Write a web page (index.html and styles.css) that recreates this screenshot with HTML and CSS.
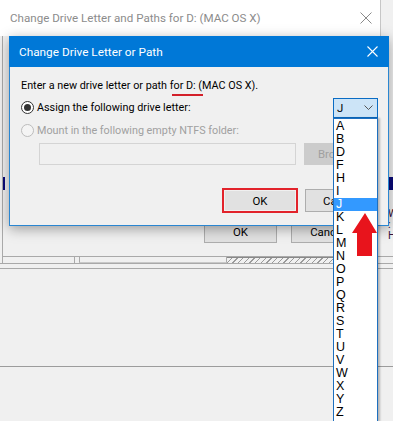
FILE: index.html
```html
<!DOCTYPE html>
<html lang="en">
<head>
    <meta charset="UTF-8">
    <title>Change Drive Letter or Path</title>
    <link rel="stylesheet" href="styles.css">
</head>
<body>
    <div class="desk">
        <!-- window behind -->
        <div class="bgwin">
            <div class="bg-title">
                <span>Change Drive Letter and Paths for D: (MAC OS X)</span>
                <svg class="bg-close" width="12" height="12" viewBox="0 0 12 12">
                    <path d="M0.5 0.5 L11.5 11.5 M11.5 0.5 L0.5 11.5" stroke="#8a8a8a" stroke-width="1" fill="none"/>
                </svg>
            </div>
            <div class="bg-body">
                <div class="bg-sel-row">
                    <span class="navy navy-left"></span>
                    <span class="navy navy-right"></span>
                </div>
                <div class="bg-buttons">
                    <div class="win-btn bg-btn">OK</div>
                    <div class="win-btn bg-btn">Cancel</div>
                    <div class="bg-side">W<br>:<br>H</div>
                </div>
            </div>
        </div>

        <div class="bg-strip">
            <div class="cell cell-a"></div>
            <div class="cell cell-b"></div>
            <div class="cell cell-hatch"></div>
        </div>
        <div class="bg-panel"></div>

        <!-- the dialog on top -->
        <div class="dialog">
            <div class="dlg-title">
                <span>Change Drive Letter or Path</span>
                <svg class="dlg-close" width="11" height="11" viewBox="0 0 11 11">
                    <path d="M0.5 0.5 L10.5 10.5 M10.5 0.5 L0.5 10.5" stroke="#fff" stroke-width="1.1" fill="none"/>
                </svg>
            </div>
            <div class="dlg-body">
                <p class="intro">Enter a new drive letter or path <span class="mark">for D:</span> (MAC OS X).</p>
                <div class="opt">
                    <span class="radio checked"></span>
                    <span>Assign the following drive letter:</span>
                    <div class="combo">
                        <span>J</span>
                        <svg width="9" height="5" viewBox="0 0 9 5">
                            <path d="M0.5 0.5 L4.5 4.5 L8.5 0.5" stroke="#555" stroke-width="1" fill="none"/>
                        </svg>
                    </div>
                </div>
                <div class="opt disabled">
                    <span class="radio"></span>
                    <span>Mount in the following empty NTFS folder:</span>
                </div>
                <div class="folder-row">
                    <div class="folder-field"></div>
                    <div class="win-btn browse">Browse...</div>
                </div>
                <div class="dlg-buttons">
                    <div class="ok-frame"><div class="win-btn">OK</div></div>
                    <div class="win-btn cancel">Cancel</div>
                </div>
            </div>
        </div>

        <ul class="droplist">
            <li>A</li><li>B</li><li>D</li><li>F</li><li>H</li><li>I</li>
            <li class="picked">J</li>
            <li>K</li><li>L</li><li>M</li><li>N</li><li>O</li><li>P</li><li>Q</li>
            <li>R</li><li>S</li><li>T</li><li>U</li><li>V</li><li>W</li><li>X</li>
            <li>Y</li><li>Z</li>
        </ul>

        <svg class="red-arrow" width="28" height="43" viewBox="0 0 28 43">
            <polygon points="15,0 27,20 22,20 22,43 7,43 7,20 2,20" fill="#e8141c"/>
        </svg>
    </div>
</body>
</html>
```

FILE: styles.css
```css
* {
    margin: 0;
    padding: 0;
    box-sizing: border-box;
}

body {
    width: 393px;
    height: 421px;
    overflow: hidden;
    background: #f0f0f0;
    font-family: Roboto, "Noto Sans", sans-serif;
    font-size: 10.8px;
    color: #000;
}

.desk {
    position: relative;
    height: 421px;
}

/* window behind */
.bg-title {
    width: 381px;
    height: 36px;
    background: #fff;
    border-right: 1px solid #c6c6c6;
    display: flex;
    align-items: center;
    justify-content: space-between;
    padding: 0 8px 0 10px;
    color: #8c8c8c;
    font-size: 11.6px;
}

.bg-body {
    height: 221px;
    border-left: 1px solid #a9a9a9;
    margin-left: 2px;
    border-bottom: 1px solid #a9a9a9;
    display: flex;
    flex-direction: column;
}

.bg-sel-row {
    margin-top: 141px;
    height: 13px;
    display: flex;
    justify-content: space-between;
}

.navy {
    background: #0a0a78;
    width: 2px;
}

.navy-right {
    width: 5px;
}

.bg-buttons {
    margin-top: 18px;
    display: flex;
    gap: 14px;
    padding-left: 201px;
}

.win-btn {
    background: #e1e1e1;
    border: 1px solid #adadad;
    display: flex;
    align-items: center;
    justify-content: center;
    height: 23px;
    font-size: 11.4px;
}

.bg-btn {
    width: 73px;
    margin-top: 12px;
}

.bg-side {
    margin-left: auto;
    width: 5px;
    overflow: hidden;
    color: #3a1440;
    line-height: 11px;
}

.bg-strip {
    height: 7px;
    display: flex;
    border-bottom: 1px solid #a9a9a9;
}

.cell {
    height: 100%;
}

.cell-a {
    width: 73px;
    border-left: 1px solid #a9a9a9;
    margin-left: 2px;
    border-right: 1px solid #a9a9a9;
}

.cell-b {
    width: 148px;
    margin-left: 4px;
    border-left: 1px solid #a9a9a9;
    border-right: 1px solid #a9a9a9;
    border-bottom: 1px solid #c8c8c8;
}

.cell-hatch {
    width: 112px;
    border-top: 1px solid #888;
    background: repeating-linear-gradient(135deg, #f0f0f0 0 3px, #9a9a9a 3px 4px);
}

.bg-panel {
    height: 99px;
    margin-top: 4px;
    border-top: 1px solid #a9a9a9;
    border-bottom: 1px solid #9c9c9c;
}

/* dialog */
.dialog {
    position: absolute;
    left: 9px;
    top: 36px;
    width: 380px;
    height: 190px;
    background: #f0f0f0;
    border: 1px solid #2a86d1;
    box-shadow: 0 3px 12px rgba(0, 0, 0, 0.35);
}

.dlg-title {
    height: 31px;
    margin: -1px -1px 0;
    background: #0078d7;
    color: #fff;
    font-size: 11.8px;
    display: flex;
    align-items: center;
    justify-content: space-between;
    padding: 0 11px 0 10px;
}

.dlg-body {
    padding: 9px 10px 0 11px;
}

.intro {
    height: 20px;
    line-height: 20px;
}

/* red hand-drawn underline */
.mark {
    position: relative;
}

.mark::after {
    content: "";
    position: absolute;
    left: 2px;
    right: -7px;
    bottom: -4px;
    height: 2px;
    background: #d3202a;
}

.opt {
    display: flex;
    align-items: center;
    gap: 3px;
    height: 23px;
}

.opt.disabled {
    color: #a0a0a0;
}

.radio {
    width: 13px;
    height: 13px;
    border-radius: 50%;
    border: 1px solid #333;
    background: #fff;
    display: flex;
    align-items: center;
    justify-content: center;
}

.radio.checked::after {
    content: "";
    width: 7px;
    height: 7px;
    border-radius: 50%;
    background: #333;
}

.disabled .radio {
    border-color: #bcbcbc;
    background: #f4f4f4;
}

.combo {
    margin-left: auto;
    width: 45px;
    height: 20px;
    background: #cce4f7;
    border: 1px solid #0a6cc4;
    display: flex;
    align-items: center;
    justify-content: space-between;
    padding: 0 4px 0 3px;
    font-size: 11.4px;
}

.folder-row {
    display: flex;
    gap: 8px;
    margin-top: 1px;
    padding-left: 18px;
}

.folder-field {
    width: 257px;
    height: 22px;
    border: 1px solid #d4d4d4;
    background: #f0f0f0;
}

.browse {
    width: 73px;
    height: 22px;
    background: #cccccc;
    border-color: #cccccc;
    color: #a0a0a0;
    justify-content: flex-start;
    padding-left: 13px;
}

.dlg-buttons {
    display: flex;
    gap: 7px;
    margin-top: 23px;
    padding-left: 201px;
}

.ok-frame {
    width: 76px;
    height: 25px;
    border: 2px solid #e2232b;
    padding: 1px;
}

.ok-frame .win-btn {
    height: 100%;
    border: none;
    background: #e1e1e1;
}

.cancel {
    width: 73px;
    height: 23px;
    margin-top: 1px;
    justify-content: flex-start;
    padding-left: 17px;
}

/* opened drop-down list */
.droplist {
    position: absolute;
    left: 333px;
    top: 118px;
    width: 45px;
    height: 304px;
    list-style: none;
    background: #fff;
    border: 1px solid #1d6fbf;
    box-shadow: 2px 0 2px rgba(0, 0, 0, 0.25);
    padding-top: 1px;
    font-family: "Liberation Sans", Arial, sans-serif;
    font-size: 12.5px;
}

.droplist li {
    height: 13px;
    line-height: 13px;
    padding-left: 2px;
}

.droplist li.picked {
    background: #3399ff;
    color: #fff;
}

.red-arrow {
    position: absolute;
    left: 350px;
    top: 213px;
}
```
